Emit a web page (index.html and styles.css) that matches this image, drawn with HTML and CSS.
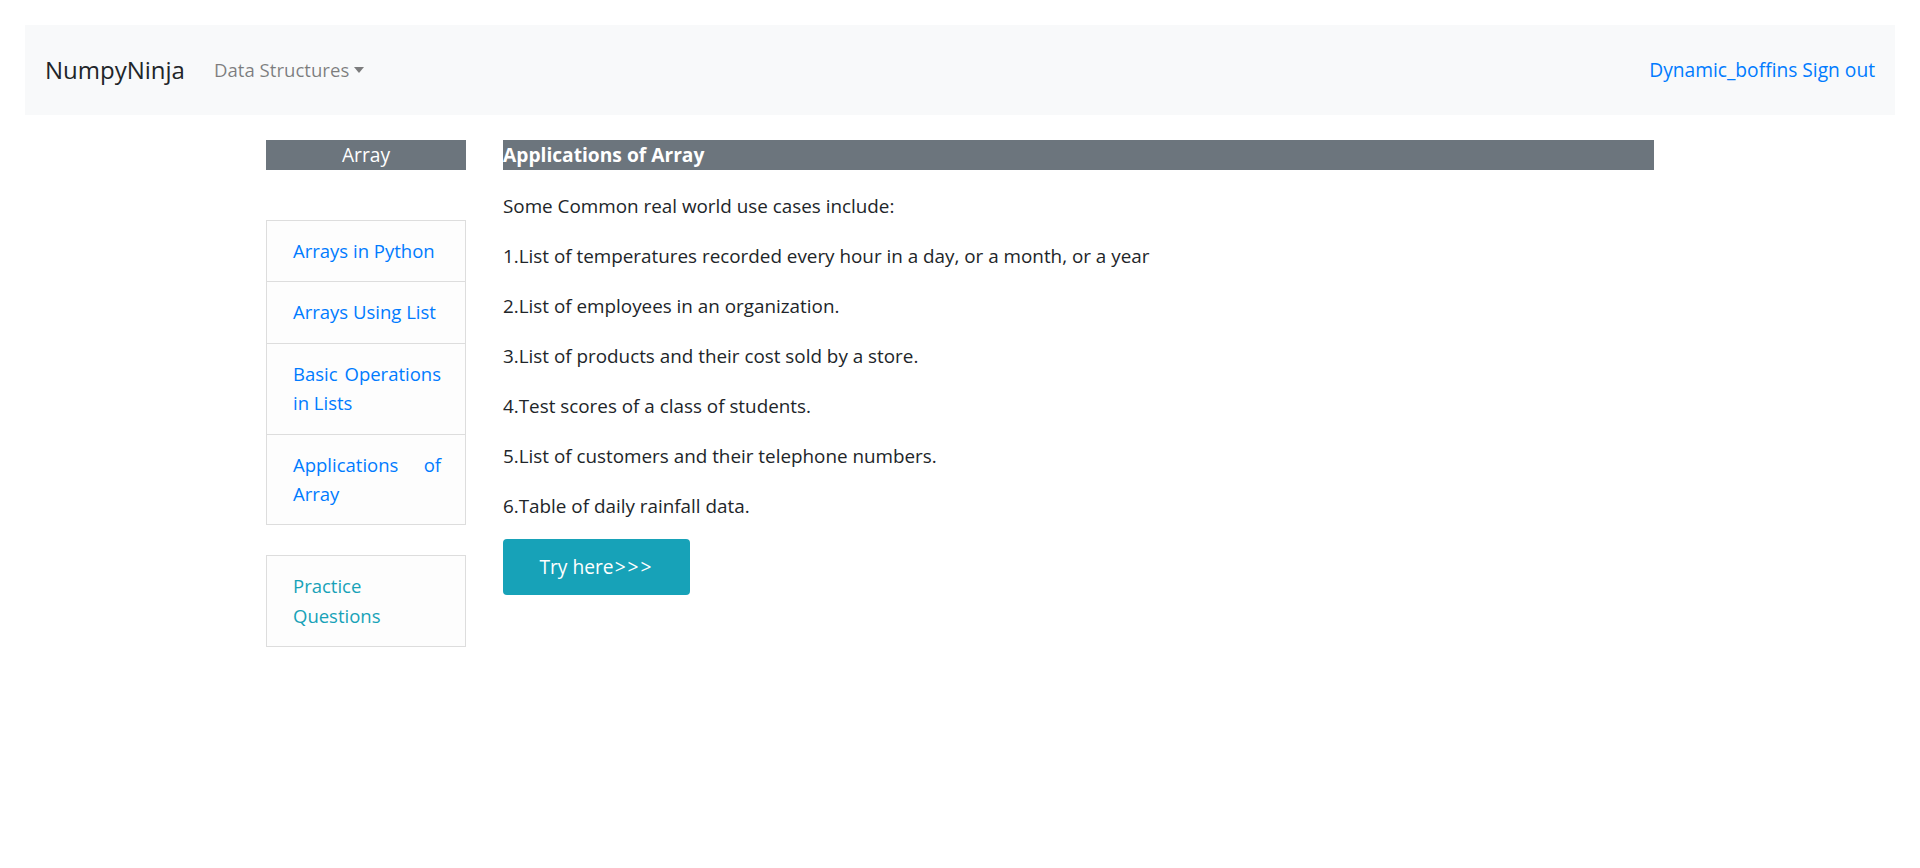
FILE: index.html
```html
<!DOCTYPE html>
<html lang="en">
<head>
<meta charset="utf-8">
<title>Applications of Array</title>
<link rel="stylesheet" href="styles.css">
</head>
<body>
<nav class="navbar">
  <div class="nav-left">
    <a class="brand" href="#">NumpyNinja</a>
    <a class="dropdown" href="#">Data Structures<span class="caret"></span></a>
  </div>
  <div class="nav-right">
    <a class="nav-link" href="#">Dynamic_boffins</a>
    <a class="nav-link" href="#">Sign out</a>
  </div>
</nav>
<div class="container">
  <aside class="sidebar">
    <div class="side-head">Array</div>
    <ul class="side-list">
      <li><a href="#">Arrays in Python</a></li>
      <li><a href="#">Arrays Using List</a></li>
      <li><a href="#">Basic Operations in Lists</a></li>
      <li><a href="#">Applications of Array</a></li>
    </ul>
    <ul class="side-list practice">
      <li><a href="#">Practice Questions</a></li>
    </ul>
  </aside>
  <main class="main">
    <h2 class="main-head">Applications of Array</h2>
    <p>Some Common real world use cases include:</p>
    <p>1.List of temperatures recorded every hour in a day, or a month, or a year</p>
    <p>2.List of employees in an organization.</p>
    <p>3.List of products and their cost sold by a store.</p>
    <p>4.Test scores of a class of students.</p>
    <p>5.List of customers and their telephone numbers.</p>
    <p>6.Table of daily rainfall data.</p>
    <a class="btn" href="#">Try here<span class="arrows">&gt;&gt;&gt;</span></a>
  </main>
</div>
</body>
</html>
```
FILE: styles.css
```css
* { box-sizing: border-box; }
body {
  margin: 0;
  padding: 25px 25px 0 25px;
  font-family: "Segoe UI", "Open Sans", "Noto Sans", sans-serif;
  font-size: 19.2px;
  line-height: 1.5;
  color: #212529;
  background: #fff;
}
a { text-decoration: none; }
.navbar {
  height: 90px;
  background: #f8f9fa;
  display: flex;
  align-items: center;
  justify-content: space-between;
  padding: 0 20px 0 20px;
}
.nav-left { display: flex; align-items: center; gap: 29px; }
.brand { color: #212529; font-size: 24px; }
.dropdown { color: rgba(0,0,0,.5); font-size: 18.6px; display: flex; align-items: center; }
.caret {
  display: inline-block;
  margin-left: 5px;
  border-top: 6px solid rgba(0,0,0,.5);
  border-left: 5px solid transparent;
  border-right: 5px solid transparent;
}
.nav-right { display: flex; gap: 5px; }
.nav-link { color: #007bff; font-size: 19.2px; }
.container {
  width: 1388px;
  margin: 25px auto 0;
  display: flex;
  gap: 37px;
}
.sidebar { width: 200px; flex: none; }
.side-head {
  background: #6c757d;
  color: #fff;
  text-align: center;
  height: 30px;
  line-height: 30px;
}
.side-list {
  list-style: none;
  margin: 50px 0 0;
  padding: 0;
  border: 1px solid #ddd;
  background: #fdfdfd;
  font-size: 18.5px;
}
.side-list li {
  padding: 15px 24px 16px 26px;
  line-height: 29.4px;
  text-align: justify;
  border-top: 1px solid #ddd;
}
.side-list li:first-child { border-top: none; }
.side-list a { color: #007bff; }
.side-list.practice { margin-top: 30px; }
.side-list.practice a { color: #17a2b8; }
.main { flex: 1; }
.main-head {
  margin: 0 0 21px;
  background: #6c757d;
  color: #fff;
  font-size: 19.2px;
  font-weight: bold;
  height: 30px;
  line-height: 30px;
}
.main p { margin: 0 0 20px; line-height: 30px; font-size: 18.85px; }
.btn {
  display: inline-block;
  background: #17a2b8;
  color: #fff;
  border-radius: 4px;
  width: 187px;
  height: 56px;
  line-height: 56px;
  text-align: center;
  margin-top: -2px;
}
.arrows { letter-spacing: 2px; margin-left: 1px; }
```
